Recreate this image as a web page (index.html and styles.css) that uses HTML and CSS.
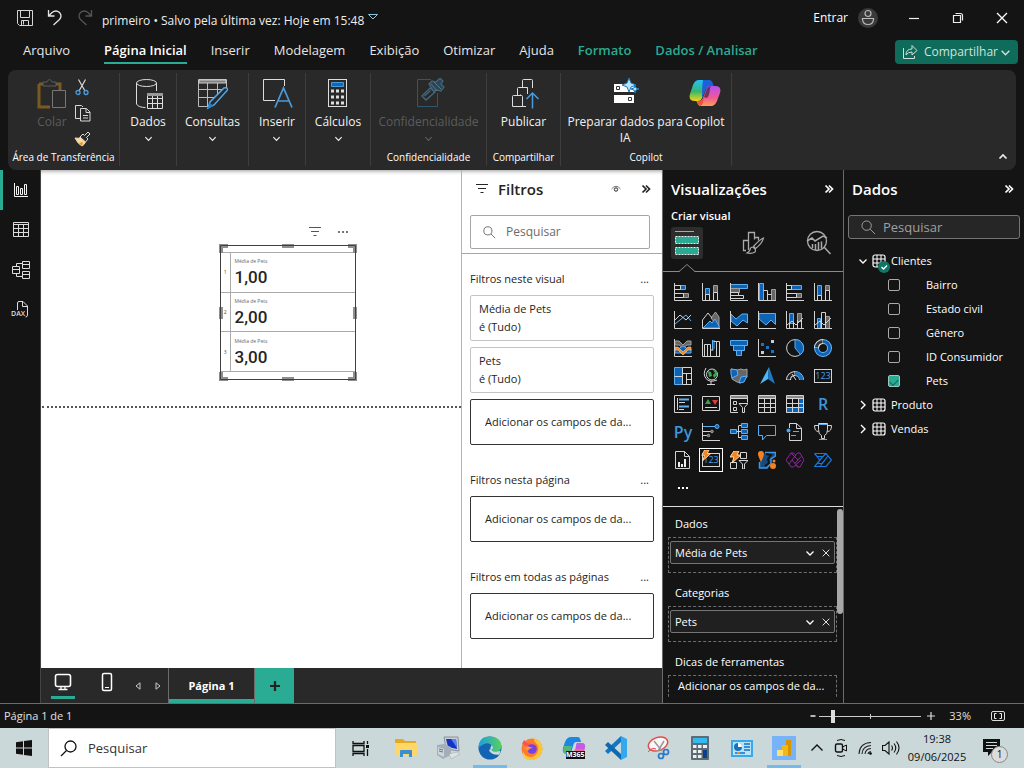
FILE: index.html
```html
<!DOCTYPE html>
<html lang="pt-BR">
<head>
<meta charset="utf-8">
<meta name="viewport" content="width=device-width, initial-scale=1">
<title>primeiro</title>
<link rel="stylesheet" href="styles.css">
</head>
<body>
<svg class="defs" aria-hidden="true">
  <symbol id="chev-down" viewBox="0 0 10 10"><path d="M1.500 3.500L5 7l3.500-3.500" fill="none" stroke="currentColor" stroke-width="1.300"/></symbol>
  <symbol id="chev-right" viewBox="0 0 10 10"><path d="M3 1l4 4-4 4" fill="none" stroke="currentColor" stroke-width="1.400"/></symbol>
  <symbol id="collapse" viewBox="0 0 10 10"><path d="M1.500 1.500L5 5 1.500 8.500M5 1.500L8.500 5 5 8.500" fill="none" stroke="currentColor" stroke-width="1.700"/></symbol>
  <symbol id="close" viewBox="0 0 12 12"><path d="M1 1l10 10M11 1L1 11" fill="none" stroke="currentColor" stroke-width="1.300"/></symbol>
  <symbol id="lens" viewBox="0 0 16 16"><path d="M9.800 9.800L15 15" stroke="currentColor" fill="none"/><circle cx="6" cy="6" r="5" fill="none" stroke="currentColor"/></symbol>
  <symbol id="funnel" viewBox="0 0 14 12"><path d="M1 1.500h12M3 5.500h8M5.500 9.500h3" fill="none" stroke="currentColor" stroke-width="1.200"/></symbol>
  <symbol id="tbl" viewBox="0 0 14 14"><rect x="1" y="1" width="12" height="12" rx="2" fill="none" stroke="currentColor" stroke-width="1.200"/><path d="M1 5h12M1 9h12M5 1v12M9 1v12" fill="none" stroke="currentColor"/></symbol>
</svg>

<header class="titlebar">
  <button class="ic" aria-label="Salvar"><svg width="16" height="16" viewBox="0 0 16 16"><path d="M.5.5h15v15h-13l-2-2zM3.500.5v7h9v-7M4.500 15.500v-5h7v5M6.500 11v3.500" fill="none" stroke="#d6d6d6"/></svg></button>
  <button class="ic" aria-label="Desfazer"><svg width="16" height="18" viewBox="0 0 16 18"><path d="M1.500 1v6h6M1.500 7L5 3.500Q9 .5 12.500 3.500 15.500 7 12.500 10.500L6.500 16" fill="none" stroke="#e4e4e4" stroke-width="1.300"/></svg></button>
  <button class="ic" aria-label="Refazer"><svg width="16" height="18" viewBox="0 0 16 18"><path d="M14.500 1v6h-6M14.500 7L11 3.500Q7 .5 3.500 3.500.5 7 3.500 10.500L9.500 16" fill="none" stroke="#555" stroke-width="1.300"/></svg></button>
  <span class="doc">primeiro • Salvo pela última vez: Hoje em 15:48</span>
  <button class="ic" aria-label="Mais opções"><svg width="10" height="10" viewBox="0 0 10 10"><path d="M.5 1.500h9L5 6z" fill="none" stroke="#8fc3e0"/></svg></button>
  <span class="spacer"></span>
  <button class="signin">Entrar <svg width="20" height="20" viewBox="0 0 20 20"><circle cx="10" cy="10" r="10" fill="#3a3a3a"/><circle cx="10" cy="5.500" r="3" fill="none" stroke="#bbb" stroke-width="1.200"/><path d="M4.500 10.500h11v1q-.5 5-5.500 5t-5.500-5z" fill="none" stroke="#bbb" stroke-width="1.200"/></svg></button>
  <button class="win" aria-label="Minimizar"><svg width="12" height="12" viewBox="0 0 12 12"><path d="M1 6.500h10" stroke="#eee" stroke-width="1.200"/></svg></button>
  <button class="win" aria-label="Restaurar"><svg width="12" height="12" viewBox="0 0 12 12"><path d="M1.500 3.500h7v7h-7zM3.500 1.500h5q2 0 2 2v5" fill="none" stroke="#eee" stroke-width="1.200"/></svg></button>
  <button class="win" aria-label="Fechar"><svg width="12" height="12"><use href="#close"/></svg></button>
</header>

<nav class="tabs" aria-label="Faixa de opções">
  <a class="tab file" href="#arquivo">Arquivo</a>
  <a class="tab on" href="#inicio">Página Inicial</a>
  <a class="tab" href="#inserir">Inserir</a>
  <a class="tab" href="#modelagem">Modelagem</a>
  <a class="tab" href="#exibicao">Exibição</a>
  <a class="tab" href="#otimizar">Otimizar</a>
  <a class="tab" href="#ajuda">Ajuda</a>
  <a class="tab ctx" href="#formato">Formato</a>
  <a class="tab ctx" href="#dados">Dados / Analisar</a>
  <span class="spacer"></span>
  <button class="share"><svg width="16" height="16" viewBox="0 0 16 16"><path d="M1.500 4v10.500h11V12M4 11q0-6 6-6V1.500L15 6.500l-5 4.500V8q-4 0-6 3z" fill="none" stroke="currentColor"/></svg>Compartilhar<svg width="11" height="11"><use href="#chev-down"/></svg></button>
</nav>

<section class="ribbon">
  <div class="group clip">
    <div class="tools">
      <button class="big off"><svg width="32" height="32" viewBox="0 0 32 32"><path d="M3 6h21v8M14 29H3V6" fill="none" stroke="#7b5a22" stroke-width="3"/><path d="M7 7V4h4q2.500-5 5 0h4v4H7z" fill="#2a2a2a" stroke="#5c5c5c"/><path d="M16.500 12.500h13v17h-13z" fill="#2a2a2a" stroke="#777"/></svg><span>Colar</span></button>
      <div class="minis">
        <button aria-label="Recortar"><svg width="16" height="17" viewBox="0 0 16 17"><path d="M4.500.5L11 12M11.500.5L5 12" fill="none" stroke="#d8d8d8" stroke-width="1.200"/><circle cx="4" cy="13.500" r="2" fill="none" stroke="#4a9bdc" stroke-width="1.300"/><circle cx="12" cy="13.500" r="2" fill="none" stroke="#4a9bdc" stroke-width="1.300"/></svg></button>
        <button aria-label="Copiar"><svg width="17" height="17" viewBox="0 0 17 17"><path d="M6 13.500H1.500V.5h6L9 2" fill="none" stroke="#d8d8d8"/><path d="M6.500 3.500h6l3.500 3.500v9H6.500zM12 3.500V7.500h4M9 10.500h5M9 13h5" fill="none" stroke="#d8d8d8"/></svg></button>
        <button aria-label="Pincel de formatação"><svg width="17" height="16" viewBox="0 0 17 16"><path d="M1 7q4 1 6-1l4.500 5Q10 14 8 15 4 13 1 7z" fill="#f3d9a8" stroke="#f6d9a4"/><path d="M5 12l4-1-1 4z" fill="#e8952c"/><path d="M6 6l3-3 1.500 1.500L14 1l2 2-3.500 3.500L14 8l-2.500 3z" fill="#2a2a2a" stroke="#ddd"/></svg></button>
      </div>
    </div>
    <h2>Área de Transferência</h2>
  </div>
  <div class="group g56"><button class="big"><svg width="32" height="32" viewBox="0 0 32 32"><path d="M4.500 5v21q2 3.500 9 3.500M24.500 5v8" fill="none" stroke="#ddd"/><ellipse cx="14.500" cy="5" rx="10" ry="3.500" fill="none" stroke="#ddd"/><path d="M15.500 15.500h15v15h-15zM15.500 20.500h15M15.500 25.500h15M20.500 18v12M25.500 18v12" fill="none" stroke="#ddd"/><path d="M15 15h16v3H15z" fill="#999"/></svg><span>Dados</span><svg class="dd"><use href="#chev-down"/></svg></button></div>
  <div class="group g72"><button class="big"><svg width="32" height="32" viewBox="0 0 32 32"><path d="M13 28.500H2.500v-27h28V10M2.500 11.500h25M2.500 19.500h17M11.500 5v23M21.500 5v12" fill="none" stroke="#bbb"/><path d="M3 2h27v3H3z" fill="#808080" stroke="#ccc"/><path d="M12 30l2-6L28 10q3-1 4 1.500L18 27z" fill="#292929" stroke="#55a9e8" stroke-width="1.500"/><path d="M12 30.500l1.500-6 4 3.500z" fill="#1683d8"/></svg><span>Consultas</span><svg class="dd"><use href="#chev-down"/></svg></button></div>
  <div class="group g56"><button class="big"><svg width="32" height="32" viewBox="0 0 32 32"><path d="M14 22.500H2.500v-21h21V8" fill="none" stroke="#ddd"/><path d="M14 29.500L22.500 10 31 29.500M17 23h11" fill="none" stroke="#4a9bdc" stroke-width="1.700"/></svg><span>Inserir</span><svg class="dd"><use href="#chev-down"/></svg></button></div>
  <div class="group g64"><button class="big"><svg width="32" height="32" viewBox="0 0 32 32"><rect x="6.500" y="1.500" width="18" height="27" fill="none" stroke="#ddd"/><path d="M9.500 4.500h12v4h-12z" fill="#1068b8" stroke="#4a9bdc"/><path d="M9 13h13M9 19h13M9 25h13" stroke="#ddd" stroke-width="3" stroke-dasharray="3 2"/></svg><span>Cálculos</span><svg class="dd"><use href="#chev-down"/></svg></button></div>
  <div class="group g115"><button class="big off"><svg width="32" height="32" viewBox="0 0 32 32"><path d="M18 1.500H4.500v27h20V15" fill="none" stroke="#33566e"/><path d="M9 18l8-8 5 4-9 8zM11.500 18l6-5.500" fill="none" stroke="#44687e" stroke-width="1.300"/><path d="M16 6l3-3 4 1 4-4 3 3-2 3 3 3-3 4-5-1-2 2z" fill="#2d4554" stroke="#44687e" stroke-width="1.200"/><path d="M21 4l7 7M18 6l6 7" stroke="#56788c"/></svg><span>Confidencialidade</span><svg class="dd"><use href="#chev-down"/></svg></button><h2>Confidencialidade</h2></div>
  <div class="group g73"><button class="big"><svg width="32" height="32" viewBox="0 0 32 32"><path d="M18 28.500H4.500v-10q0-1 1-1h7v-1M14.500 28V18.500q0-1-1-1h-4v-7q0-1 1-1h9v3M19.500 16V10.500q0-1-1-1h-4v-7q0-1 1-1h8q1 0 1 1V10" fill="none" stroke="#ddd"/><path d="M24.500 30.500v-15M18.500 21l6-6 6 6" fill="none" stroke="#4a9bdc" stroke-width="1.500"/></svg><span>Publicar</span></button><h2>Compartilhar</h2></div>
  <div class="group ai">
    <div class="tools">
      <button class="big prep"><svg width="32" height="32" viewBox="0 0 32 32"><path d="M5 6h20v8H5zM5 17h20v8H5z" fill="#fff"/><path d="M7.500 8.500h3v3h-3zM19.500 19.500h3v3h-3z" fill="#fff" stroke="#333"/><path d="M20 0l2 5 5 2-5 2-2 5-2-5-5-2 5-2zM26 7l1 3 3 1-3 1-1 3-1-3-3-1 3-1z" fill="#b8e2fa" stroke="#1879be"/></svg><span>Preparar dados para<br>IA</span></button>
      <button class="big"><svg width="32" height="32" viewBox="0 0 32 32"><defs><linearGradient id="ca" x2="0" y2="1"><stop offset="0" stop-color="#23c0fd"/><stop offset=".55" stop-color="#38b76a"/><stop offset="1" stop-color="#f4d414"/></linearGradient><linearGradient id="cb" x2="0" y2="1"><stop offset="0" stop-color="#b64ff0"/><stop offset=".6" stop-color="#f25a91"/><stop offset="1" stop-color="#ffa252"/></linearGradient></defs><path d="M10 2h10l-5 13-2 5q-1 3-4 3H6q-7 0-5-7L4 7q2-5 6-5z" fill="url(#ca)"/><path d="M14 2h6q3 0 4 4l1 3h-5q-3 0-4 4l-3 7q0-12 1-18z" fill="#1b62d8"/><path d="M22 28H12q-3 0-4-4l-1-1h3q3 0 4-3l3-8q1-4 4-4h5q7 0 5 7l-3 8q-2 5-6 5z" fill="url(#cb)"/><path d="M8 23h3q3 0 3-3l1-2-1 7q-1 3-3 3-2-1-3-5z" fill="#f0523a"/><path d="M18 11l-3 8 2 1q3 0 4-9 0-3 2-3-4 0-5 3z" fill="#141414" opacity=".55"/></svg><span>Copilot</span></button>
    </div>
    <h2>Copilot</h2>
  </div>
  <span class="spacer"></span>
  <button class="fold" aria-label="Recolher faixa"><svg width="10" height="10" viewBox="0 0 10 10"><path d="M1.500 6.500L5 3l3.500 3.500" fill="none" stroke="#eee" stroke-width="1.700"/></svg></button>
</section>

<main class="main">
  <nav class="rail" aria-label="Exibições">
    <a class="on" href="#relatorio" aria-label="Relatório"><svg width="16" height="16" viewBox="0 0 16 16"><path d="M1.500 1v13.500H15M3.500 4.500h2v8h-2zM7.500 6.500h2v6h-2zM11.500 2.500h2v10h-2z" fill="none" stroke="#f4f4f4"/></svg></a>
    <a href="#tabela" aria-label="Tabela"><svg width="18" height="16" viewBox="0 0 18 16"><path d="M1.500.5h15v14h-15zM1.500 2.500h15M1.500 6.500h15M1.500 10.500h15M6.500 3v12M11.500 3v12" fill="none" stroke="#ddd"/></svg></a>
    <a href="#modelo" aria-label="Modelo"><svg width="18" height="18" viewBox="0 0 18 18"><path d="M10.500.5h7v7h-7zM10.500 3.500h7M.5 5.500h7v7h-7zM.5 8.500h7M10.500 10.500h7v7h-7zM10.500 13.500h7M4.500 5V2.500h6M4.500 13v2.500h6" fill="none" stroke="#ddd"/></svg></a>
    <a class="dax" href="#dax" aria-label="Consulta DAX"><svg width="18" height="18" viewBox="0 0 18 18"><path d="M5.500 11V2q0-1.500 1.500-1.500h4L15.500 5v9q0 2-2 2M10.500 1v4.500h5" fill="none" stroke="#ddd"/></svg><b>DAX</b></a>
  </nav>

  <div class="work">
    <div class="stage">
      <section class="canvas" aria-label="Página do relatório">
        <div class="pageend"></div>
        <div class="visual">
          <div class="vtools"><svg width="14" height="12"><use href="#funnel"/></svg><svg width="12" height="4" viewBox="0 0 12 4"><path d="M1 2h2M5 2h2M9 2h2" stroke="#777" stroke-width="2"/></svg></div>
          <table class="cards">
            <tr><th>1</th><td><small>Média de Pets</small><strong>1,00</strong></td></tr>
            <tr><th>2</th><td><small>Média de Pets</small><strong>2,00</strong></td></tr>
            <tr><th>3</th><td><small>Média de Pets</small><strong>3,00</strong></td></tr>
          </table>
          <svg class="handles" viewBox="0 0 138 137" preserveAspectRatio="none"><path d="M2 9V2h7M129 2h7v7M136 128v7h-7M9 135H2v-7M63 2h12M63 135h12M2 63v12M136 63v12" fill="none" stroke="#8e8e8e" stroke-width="4"/><path d="M1.500 1.500h135v134h-135z" fill="none" stroke="#404040"/></svg>
        </div>
      </section>

      <aside class="filters" aria-label="Filtros">
        <header class="phead"><svg width="14" height="12"><use href="#funnel"/></svg><h1>Filtros</h1>
          <button class="ic" aria-label="Mostrar filtros"><svg width="10" height="8" viewBox="0 0 10 8"><path d="M.5 4Q5-1.500 9.500 4" fill="none" stroke="#777"/><circle cx="5" cy="4.500" r="1.700" fill="none" stroke="#222"/></svg></button>
          <button class="ic" aria-label="Recolher"><svg width="10" height="10"><use href="#collapse"/></svg></button></header>
        <label class="search"><svg width="13" height="13"><use href="#lens"/></svg><input type="text" placeholder="Pesquisar" aria-label="Pesquisar filtros"></label>
        <div class="flist">
          <section><h3>Filtros neste visual<button class="dots">...</button></h3>
            <div class="card"><span>Média de Pets</span><span>é (Tudo)</span></div>
            <div class="card"><span>Pets</span><span>é (Tudo)</span></div>
            <div class="card drop">Adicionar os campos de da...</div></section>
          <section><h3>Filtros nesta página<button class="dots">...</button></h3><div class="card drop">Adicionar os campos de da...</div></section>
          <section><h3>Filtros em todas as páginas<button class="dots">...</button></h3><div class="card drop">Adicionar os campos de da...</div></section>
        </div>
      </aside>
    </div>

    <footer class="pages">
      <button class="view on" aria-label="Layout da área de trabalho"><svg width="18" height="18" viewBox="0 0 18 18"><rect x="1.500" y="1.500" width="15" height="12" rx="2" fill="none" stroke="#fff" stroke-width="1.600"/><path d="M7 13.500v2.500M11 13.500v2.500M4.500 16.500h9" stroke="#fff" stroke-width="1.300"/></svg></button>
      <button class="view" aria-label="Layout móvel"><svg width="12" height="20" viewBox="0 0 12 20"><rect x="1.500" y="1.500" width="9" height="17" rx="1.500" fill="none" stroke="#fff" stroke-width="1.500"/><path d="M4 15.500h4" stroke="#fff"/></svg></button>
      <button class="arrow" aria-label="Página anterior"><svg width="6" height="8" viewBox="0 0 6 8"><path d="M5 .8v6.400L1 4z" fill="none" stroke="#ccc"/></svg></button>
      <button class="arrow" aria-label="Próxima página"><svg width="6" height="8" viewBox="0 0 6 8"><path d="M1 .8v6.400L5 4z" fill="none" stroke="#ccc"/></svg></button>
      <button class="page">Página 1</button>
      <button class="add" aria-label="Nova página"><svg width="12" height="12" viewBox="0 0 12 12"><path d="M6 1v10M1 6h10" stroke="#222" stroke-width="2.200"/></svg></button>
    </footer>
  </div>

  <aside class="viz" aria-label="Visualizações">
    <header class="phead"><h1>Visualizações</h1><button class="ic" aria-label="Recolher"><svg width="10" height="10"><use href="#collapse"/></svg></button></header>
    <h2 class="sub">Criar visual</h2>
    <div class="modes">
      <button class="mode on" aria-label="Criar visual"><svg width="26" height="26" viewBox="0 0 26 26"><path d="M1 1.500h19" stroke="#aaa"/><path d="M1.500 6.500h23v7h-23zM1.500 17.500h23v7h-23z" fill="#2aaa92" stroke="#eee" stroke-dasharray="2 1"/></svg></button>
      <button class="mode" aria-label="Formatar visual"><svg width="24" height="26" viewBox="0 0 24 26"><path d="M5 20.500H2.500V10.500h5v-8h6v7M7.500 10v10M13.500 7.500h4v3" fill="none" stroke="#aaa" stroke-width="1.300"/><path d="M22.500 8q-1 5-8 10.500l-2-2Q18 10 22.500 8zM12 17q-3 0-3 3-1 2-3 3 5 1 8-1 1-2 0-3z" fill="#151515" stroke="#aaa" stroke-width="1.200"/></svg></button>
      <button class="mode" aria-label="Análise"><svg width="26" height="26" viewBox="0 0 26 26"><circle cx="11" cy="11" r="9.500" fill="none" stroke="#aaa" stroke-width="1.300"/><path d="M1 11l5-3 3 3 8-5 4 2M6.500 18v-4M9.500 20v-6M12.500 20v-8M15.500 18.500v-7M18 17l6.500 7" fill="none" stroke="#aaa" stroke-width="1.500"/></svg></button>
    </div>
    <svg class="notch" width="16" height="8" viewBox="0 0 16 8"><path d="M0 8h16L8 0z" fill="#151515"/><path d="M0 7.500L8 .5l8 7" fill="none" stroke="#8a8a8a"/></svg>
    <div class="gallery">
      <button aria-label="Barras empilhadas"><svg viewBox="0 0 18 18"><path class="b" d="M6.500 2.500h5v4h-5z"/><path class="g" d="M9.500 10.500h5v4h-5z"/><path class="w" d="M.5 0v17.500H18M.5 2.500h6v4h-6M.5 10.500h9v4h-9"/></svg></button>
      <button aria-label="Colunas empilhadas"><svg viewBox="0 0 18 18"><path class="b" d="M3.500 5.500h4v6h-4z"/><path class="g" d="M11.500 2.500h4v7h-4z"/><path class="w" d="M.5 0v17.500H18M3.500 17v-5.500h4V17M11.500 17V9.500h4V17"/></svg></button>
      <button aria-label="Barras clusterizadas"><svg viewBox="0 0 18 18"><path class="b" d="M.5 1.500h17v4H.5z"/><path class="g" d="M.5 5.500h9v4h-9z"/><path class="w" d="M.5 0v17.500H18M.5 9.500h8v3h-8M.5 12.500h13v3H.5"/></svg></button>
      <button aria-label="Colunas clusterizadas"><svg viewBox="0 0 18 18"><path class="b" d="M1.500.5h4v17h-4z"/><path class="g" d="M13.500 6.500h4v11h-4z"/><path class="w" d="M.5 0v17.500H18M5.500 7.500h4v10M9.500 11.500h4"/></svg></button>
      <button aria-label="Barras 100%"><svg viewBox="0 0 18 18"><path class="b" d="M5.500 2.500h10v4h-10z"/><path class="g" d="M10.500 10.500h5v4h-5z"/><path class="w" d="M.5 0v17.500H18M.5 2.500h5v4h-5M.5 10.500h10v4H.5"/></svg></button>
      <button aria-label="Colunas 100%"><svg viewBox="0 0 18 18"><path class="b" d="M3.500 2.500h4v10h-4z"/><path class="g" d="M11.500 2.500h4v5h-4z"/><path class="w" d="M.5 0v17.500H18M3.500 17v-4.500h4V17M11.500 17V7.500h4V17"/></svg></button>

      <button aria-label="Linhas"><svg viewBox="0 0 18 18"><path class="lb" d="M1 13l5-4 6-5 5 6"/><path class="w" d="M.5 0v17.500H18M1 9l5-5 6 5 5-5"/></svg></button>
      <button aria-label="Área"><svg viewBox="0 0 18 18"><path class="g" d="M9 7l4.500-6L17 6v11z"/><path class="b" d="M1 17l7-7 2 2 3-4 4 7v2z"/><path class="w" d="M.5 9L6 2l4 5M.5 9v8.500H18"/></svg></button>
      <button aria-label="Área empilhada"><svg viewBox="0 0 18 18"><path class="b" d="M1 3l5 5 6-5h5.500v9L13 9l-6 6-6-5z"/><path class="w" d="M.5 0v17.500H18"/></svg></button>
      <button aria-label="Área 100%"><svg viewBox="0 0 18 18"><path class="b" d="M1 2.500h16.500v11L13 9l-5 5-7-6z"/><path class="w" d="M.5 0v17.500H18"/></svg></button>
      <button aria-label="Linha e coluna empilhada"><svg viewBox="0 0 18 18"><path class="b" d="M3.500 2.500h4v10h-4z"/><path class="g" d="M11.500 2.500h4v8h-4z"/><path class="w" d="M.5 0v17.500H18M3.500 12v5M7.500 12v5M11.500 9v8M15.500 9v8M1 14l5-4 4 4 7-7"/></svg></button>
      <button aria-label="Linha e coluna clusterizada"><svg viewBox="0 0 18 18"><path class="b" d="M3.500 7.500h3v10h-3z"/><path class="g" d="M11.500 5.500h4v12h-4z"/><path class="w" d="M.5 0v17.500H18M7.500 17V1.500h4V17M1 14l5-4 4 4 7-7"/></svg></button>

      <button aria-label="Faixa de opções"><svg viewBox="0 0 18 18"><path class="g" d="M1 2h4l4 4 4-4h4v4h-4l-4 3-4-3H1z"/><path class="b" d="M1 10h3l5-3 5 3h3v4H1z"/><path d="M1 8h3l5 5 5-5h3v3h-3l-5 5-5-5H1z" fill="#f08a2a" stroke="#fbd5a0" stroke-width=".6"/><path class="w" d="M.5 0v17.500H18"/></svg></button>
      <button aria-label="Cascata"><svg viewBox="0 0 18 18"><path class="lb" d="M10.500 1v10M12 1v9"/><path class="w" d="M.5 0v17.500H18M2.500 17V5.500h3V17M5.500 5.500h3v5.500h3M8.500 11v6M11.500 2.500h3V17M14.500 2.500h3V17"/></svg></button>
      <button aria-label="Funil"><svg viewBox="0 0 18 18"><path class="b" d="M.5 1.500h17v5H.5zM3.500 6.500h11v5h-11zM6.500 11.500h5v5h-5z"/></svg></button>
      <button aria-label="Dispersão"><svg viewBox="0 0 18 18"><path d="M3 4h3v3H3zM8 7h3v3H8zM13 11h3v3h-3z" fill="#1974c8"/><path d="M13 1h3v3h-3zM3 12h3v3H3z" fill="#ccc"/><path class="w" d="M.5 0v17.500H18"/></svg></button>
      <button aria-label="Pizza"><svg viewBox="0 0 18 18"><circle class="w" cx="9" cy="9" r="8.400"/><path class="b" d="M9 .6A8.400 8.400 0 0 1 14.500 15.500L9 9z"/></svg></button>
      <button aria-label="Rosca"><svg viewBox="0 0 18 18"><circle cx="9" cy="9" r="6.500" fill="none" stroke="#6cb8f6" stroke-width="5"/><circle cx="9" cy="9" r="6.500" fill="none" stroke="#0f63b5" stroke-width="3"/><path d="M2.500 9A6.500 6.500 0 0 1 9 2.500" fill="none" stroke="#ddd" stroke-width="5"/><path d="M2.500 8.500A6.500 6.500 0 0 1 8.500 2.500" fill="none" stroke="#333" stroke-width="3"/></svg></button>

      <button aria-label="Treemap"><svg viewBox="0 0 18 18"><path class="b" d="M.5.5h8v17h-8z"/><path class="w" d="M8.500.5h9v17h-9zM8.500 6.500h9M12.500 6.500v11M12.500 12.500h5M.5 9.500h8"/></svg></button>
      <button aria-label="Mapa"><svg viewBox="0 0 18 18"><circle class="w" cx="10" cy="7.500" r="5.500"/><path d="M6 4l3 1 1 4-3 1zM11 3l4 1v4l-3 3-1-3 2-2z" fill="#3da653"/><path class="w" d="M4 1Q.5 7 4 11.500T15 13M9 14v3M5 17.500h8"/></svg></button>
      <button aria-label="Mapa coroplético"><svg viewBox="0 0 18 18"><path class="g" d="M1 2l6 1 4-1 3 1 3-1v8l-6 6-4-1-5-3z"/><path class="b" d="M1 2l6 1 1 5-6 3-1-4zM9 16l2-6 6-1-3 6z"/></svg></button>
      <button aria-label="Azure Maps"><svg viewBox="0 0 18 18"><path d="M11 0L2 17l8-5z" fill="#4db8ef"/><path d="M11 0l6 17-7-5z" fill="#1d78c2"/></svg></button>
      <button aria-label="Medidor"><svg viewBox="0 0 18 18"><path d="M2.500 13a6.500 6.500 0 0 1 13 0" fill="none" stroke="#ddd" stroke-width="5"/><path d="M2.500 12.500a6.500 6.500 0 0 1 6-6" fill="none" stroke="#222" stroke-width="3"/><path d="M9 6.500a6.500 6.500 0 0 1 6.500 6.500" fill="none" stroke="#1974c8" stroke-width="4"/><path class="w" d="M6 7l4 6"/></svg></button>
      <button class="num" aria-label="Cartão"><span>123</span></button>

      <button aria-label="Cartão de várias linhas"><svg viewBox="0 0 18 18"><path class="w" d="M.5.500h17v17H.5zM3.500 3v12"/><path class="lb" d="M5 4.500h10M5 11.500h10" stroke-width="2"/><path class="w" d="M5 7.500h6M5 14.500h5"/></svg></button>
      <button aria-label="KPI"><svg viewBox="0 0 18 18"><path class="w" d="M.5 1.500h17v14H.5zM3 12.500h12"/><path d="M3 9l3-5 3 5z" fill="#37a34a"/><path d="M10 5h6l-3 5z" fill="#e03a3a"/></svg></button>
      <button aria-label="Segmentação"><svg viewBox="0 0 18 18"><path class="w" d="M8 17.500H.5V.500h17v7M.5 3.500h17M3.500 6.500h3v3h-3zM3.500 12.500h3v3h-3zM9 8.500h9l-3.500 4v5h-2v-5z"/><path d="M1 1h16v2H1z" fill="#888"/></svg></button>
      <button aria-label="Tabela"><svg viewBox="0 0 18 18"><path class="w" d="M.5.500h17v17H.5zM.5 3.500h17M.5 8.500h17M.5 12.500h17M6.500 3v14M12.500 3v14"/><path d="M1 1h16v2H1z" fill="#888"/></svg></button>
      <button aria-label="Matriz"><svg viewBox="0 0 18 18"><path class="b" d="M12.500 3.500h5v14H.5v-5h12z"/><path class="w" d="M.5.500h17v17H.5zM.5 3.500h17M.5 8.500h17M.5 12.500h17M6.500 3v14M12.500 3v14"/><path d="M1 1h16v2H1z" fill="#888"/></svg></button>
      <button class="txt" aria-label="Visual R">R</button>

      <button class="txt" aria-label="Visual Python">Py</button>
      <button aria-label="Influenciadores"><svg viewBox="0 0 18 18"><path class="w" d="M.5 0v17.500H18M1 8.500h8M1 12.500h4"/><path class="lb" d="M1 3.500h12"/><circle class="b" cx="15" cy="3.500" r="2"/><circle class="g" cx="10" cy="8.500" r="1.300"/><circle class="g" cx="6.500" cy="12.500" r="1.300"/></svg></button>
      <button aria-label="Árvore hierárquica"><svg viewBox="0 0 18 18"><path class="w" d="M6 8.500h6M8.500 3v12M8.500 2.500h3M8.500 14.500h3"/><path class="b" d="M.5 6.500h6v4h-6zM11.500.5h6v4h-6zM11.500 6.500h6v4h-6zM11.500 12.500h6v4h-6z"/></svg></button>
      <button aria-label="P e R"><svg viewBox="0 0 18 18"><path class="lb" d="M.5 2.500h17v10H8.500L4.500 17v-4.500h-4z"/></svg></button>
      <button aria-label="Narrativa"><svg viewBox="0 0 18 18"><path class="w" d="M3.500 5V.5h7l5 4.500v12.500h-12V10M10.500.5v5h5"/><circle cx="2.500" cy="7.500" r="2" fill="#4aa3ee"/><path class="lb" d="M7 8.500h6M5 12.500h5"/></svg></button>
      <button aria-label="Metas"><svg viewBox="0 0 18 18"><path class="w" d="M4.500.5h9v6q0 5-3 6v3h-3v-3q-3-1-3-6zM4.500 2.500h-4q0 6 4 6M13.500 2.500h4q0 6-4 6"/><path class="lb" d="M4.500 1.500h9M5 16.500h8"/></svg></button>

      <button aria-label="Relatório paginado"><svg viewBox="0 0 18 18"><path class="w" d="M1.500.5h9l5 5v12h-14zM10.500.5v5h5"/><path d="M4 11h2v5H4zM7 13h2v3H7zM10 8h2v8h-2z" fill="#eee"/></svg></button>
      <button class="num sel" aria-label="Cartão (novo)"><span>123</span><svg viewBox="0 0 18 18"><path d="M4 0h5L7 4h4L2 12l2-6H1z" fill="#f58220" stroke="#ffe0a8"/></svg></button>
      <button aria-label="Segmentação de dados (nova)"><svg viewBox="0 0 18 18"><path class="w" d="M10.500 1.500h6v6h-6zM.5 11.500h6v6h-6zM9 9.500h9l-3.500 3.500v5h-2v-5z"/><path d="M4 0h5L7 4h4L2 12l2-6H0z" fill="#f58220" stroke="#ffe0a8"/></svg></button>
      <button aria-label="ArcGIS"><svg viewBox="0 0 18 18"><path d="M7 1.500h10.500V5L13 8v4l-4 5H1.500v-6" fill="#164a80" stroke="#3a96e8" stroke-width="1.500"/><path d="M8 3l5 1-3 4 1 4-4 3" fill="none" stroke="#141414" stroke-width="2"/><path d="M3 11Q0 5 0 3a3 3 0 0 1 6 0q0 2-3 8z" fill="#f58220"/><circle cx="15" cy="15" r="3" fill="#f58220"/><circle cx="16" cy="10" r="1.500" fill="#f58220"/></svg></button>
      <button aria-label="Power Apps"><svg viewBox="0 0 18 18"><path d="M5 2h2.500l2 2 2-2H14l4 7-4 7h-2.500l-2-2-2 2H5L0 9zM5 2l7 7-3 3.500L6 9l4-5M12 9l3-3.500M6 9l-3 4M9 12.500l3 3.500M9.500 14L15 9" fill="none" stroke="#8a2a9a"/></svg></button>
      <button aria-label="Power Automate"><svg viewBox="0 0 18 18"><path d="M.5 2.500h11.500L17.500 9 12 15.500H.5L3 12.500h5L11 9M.5 2.500L3 5.500h6L3 12.500M5.500 9L3 5.500M12 2.500L9 5.500M14 5L6 15.500" fill="none" stroke="#1478dc" stroke-width="1.200"/></svg></button>

      <button class="more" aria-label="Obter mais visuais"><svg viewBox="0 0 18 18"><path d="M4 9h2M8 9h2M12 9h2" stroke="#fff" stroke-width="2"/></svg></button>
    </div>
    <div class="wells">
      <h3>Dados</h3>
      <div class="well"><div class="pill"><span>Média de Pets</span><button class="ic" aria-label="Opções"><svg width="10" height="10"><use href="#chev-down"/></svg></button><button class="ic" aria-label="Remover"><svg width="8" height="8"><use href="#close"/></svg></button></div></div>
      <h3>Categorias</h3>
      <div class="well"><div class="pill"><span>Pets</span><button class="ic" aria-label="Opções"><svg width="10" height="10"><use href="#chev-down"/></svg></button><button class="ic" aria-label="Remover"><svg width="8" height="8"><use href="#close"/></svg></button></div></div>
      <h3>Dicas de ferramentas</h3>
      <div class="well last"><p>Adicionar os campos de da...</p></div>
      <i class="thumb"></i>
    </div>
  </aside>

  <aside class="data" aria-label="Dados">
    <header class="phead"><h1>Dados</h1><button class="ic" aria-label="Recolher"><svg width="10" height="10"><use href="#collapse"/></svg></button></header>
    <label class="search dark"><svg width="15" height="15"><use href="#lens"/></svg><input type="text" placeholder="Pesquisar" aria-label="Pesquisar dados"></label>
    <ul class="tree">
      <li><button class="node"><svg width="10" height="10"><use href="#chev-down"/></svg><span class="ticon"><svg width="14" height="14"><use href="#tbl"/></svg><svg class="ok" width="12" height="12" viewBox="0 0 12 12"><circle cx="6" cy="6" r="6" fill="#0f7564"/><path d="M3.500 6l2 2 3.500-3.500" fill="none" stroke="#fff" stroke-width="1.300"/></svg></span>Clientes</button>
        <ul>
          <li><label><input type="checkbox">Bairro</label></li>
          <li><label><input type="checkbox">Estado civil</label></li>
          <li><label><input type="checkbox">Gênero</label></li>
          <li><label><input type="checkbox">ID Consumidor</label></li>
          <li><label><input type="checkbox" checked>Pets</label></li>
        </ul></li>
      <li><button class="node"><svg width="10" height="10"><use href="#chev-right"/></svg><span class="ticon"><svg width="14" height="14"><use href="#tbl"/></svg></span>Produto</button></li>
      <li><button class="node"><svg width="10" height="10"><use href="#chev-right"/></svg><span class="ticon"><svg width="14" height="14"><use href="#tbl"/></svg></span>Vendas</button></li>
    </ul>
  </aside>
</main>

<footer class="status"><span>Página 1 de 1</span><span class="spacer"></span>
  <button class="ic" aria-label="Reduzir"><svg width="6" height="8" viewBox="0 0 6 8"><path d="M.5 4h5" stroke="#eee" stroke-width="1.500"/></svg></button>
  <input class="zoom" type="range" min="10" max="100" value="21" aria-label="Zoom">
  <button class="ic" aria-label="Ampliar"><svg width="8" height="8" viewBox="0 0 8 8"><path d="M0 4h8M4 0v8" stroke="#ddd" stroke-width="1.200"/></svg></button>
  <span class="pct">33%</span>
  <button class="ic" aria-label="Ajustar à página"><svg width="16" height="12" viewBox="0 0 16 12"><rect x="1.500" y="1.500" width="13" height="9" rx="1.500" fill="none" stroke="#ddd"/><path d="M6.500 3.500h-2v5h2M9.500 3.500h2v5h-2" fill="none" stroke="#eee"/></svg></button>
</footer>

<footer class="taskbar">
  <button class="start" aria-label="Iniciar"><svg width="16" height="16" viewBox="0 0 16 16"><path d="M0 2.300l7-1v6.200H0zM8 1.100L16 0v7.500H8zM0 8.500h7v6.200l-7-1zM8 8.500h8V16l-8-1.100z" fill="#111"/></svg></button>
  <label class="tsearch"><svg width="17" height="17" viewBox="0 0 17 17"><circle cx="10.500" cy="6.500" r="5.500" fill="none" stroke="#111" stroke-width="1.300"/><path d="M6.500 10.500L1 16" stroke="#111" stroke-width="1.300"/></svg><input type="text" placeholder="Pesquisar" aria-label="Pesquisar no computador"></label>
  <button class="tview" aria-label="Visão de tarefas"><svg width="17" height="17" viewBox="0 0 17 17"><path d="M1 1v2.500h11V1M1 5.500h11v6H1zM1 16v-2.500h11V16M15.500 1v3M15.500 9v7" fill="none" stroke="#111" stroke-width="1.300"/><path d="M14 5h3v3h-3z" fill="#111"/></svg></button>
  <div class="apps">
    <button aria-label="Explorador"><svg viewBox="0 0 24 24"><path d="M1 3h8l2 2h11v15H1z" fill="#e9a91f"/><path d="M1 7h22v13H1z" fill="#ffd668"/><path d="M6 21v-6q0-1 1-1h10q1 0 1 1v6h-3v-3H9v3z" fill="#3a8fd0"/></svg></button>
    <button aria-label="Área remota"><svg viewBox="0 0 24 24"><path d="M8 1h14l1 14-13-2z" fill="#c9cfd6" stroke="#8a929a"/><path d="M10 3h10l1 10-9-2z" fill="#1431c8"/><path d="M15 3h5l1 9z" fill="#5b82ee"/><path d="M1 9l7-1 7 3v8l-8 4-6-4z" fill="#a3aeb8"/><path d="M2 11l6 2v8l-6-3z" fill="#cdd5db"/><path d="M3 13l4 1M3 15l4 1" stroke="#6d7780"/><path d="M13 18l8-2 3 2-9 5z" fill="#dfe3e6" stroke="#9aa2a9" stroke-width=".5"/></svg></button>
    <button class="run" aria-label="Edge"><svg viewBox="0 0 24 24"><defs><linearGradient id="ed"><stop offset="0" stop-color="#1c9fe0"/><stop offset="1" stop-color="#58d05a"/></linearGradient></defs><circle cx="12" cy="12" r="11.500" fill="#1464b4"/><path d="M.5 12Q1 0 12 .5 23 1 23.500 10q0 5-6 5.500-4 0-4-2 2-2 0-4.500-3-3-7.500-1Q2 10 .5 12z" fill="url(#ed)"/><path d="M13 13q-1 4 4 5 3 0 6-1-2 1-5 1-6 0-7-4z" fill="#cbd8da"/><path d="M13.500 9q3 3 0 4.500 0 2 4 2 3 0 5-1l-1 4q-7 1-9-3-1-3 1-6.500z" fill="#cbd8da"/></svg></button>
    <button aria-label="Firefox"><svg viewBox="0 0 24 24"><circle cx="12" cy="13" r="10.500" fill="#ff7a2c"/><path d="M15 1q-2 4 1 6 3 3 2 8-2 6-8 6-6-1-7-6-1 9 8 9 11-1 11.500-11Q22 7 19 5q-4-1-4-4z" fill="#ffc633"/><path d="M2 8l2-4 3 3 5 1-3 3z" fill="#ff4f5e"/><circle cx="12" cy="13" r="4.800" fill="#7542e5"/><path d="M4 12q4-3 9 0-4 0-5 3z" fill="#ff9640"/></svg></button>
    <button class="m365" aria-label="M365 Copilot"><svg viewBox="0 0 24 24"><path d="M9 1h7q2 0 3 5h-5q-2 0-3 4l-2 7H3q-3 0-2-5l2-6q2-5 6-5z" fill="#1c87e5"/><path d="M2 10h8l-2 8H3q-3-1-1-8z" fill="#54b77a"/><path d="M15 7h5q4 0 3 5l-2 7h-9l2-9q0-3 1-3z" fill="#c55ae6"/><path d="M13 13h9l-2 6h-9z" fill="#f4688e"/></svg><b>M365</b></button>
    <button aria-label="VS Code"><svg viewBox="0 0 24 24"><path d="M17 0l6 3v18l-6 3z" fill="#35a7ee"/><path d="M17 0v6L4 18l-3-3z" fill="#1277c2"/><path d="M17 24v-6L4 6 1 9z" fill="#0f69b0"/></svg></button>
    <button aria-label="Captura"><svg viewBox="0 0 24 24"><ellipse cx="12" cy="8" rx="10" ry="6.500" transform="rotate(-20 12 8)" fill="#f7f7f7" stroke="#e34c4c" stroke-width="1.500"/><path d="M2 16q4-5 8-3" stroke="#e34c4c" fill="none"/><path d="M8 5l8 10M18 5l-6 10" stroke="#999" stroke-width="1.500"/><circle cx="15" cy="20" r="2.500" fill="none" stroke="#2878c8" stroke-width="1.700"/><circle cx="20" cy="16" r="2.500" fill="none" stroke="#2878c8" stroke-width="1.700"/></svg></button>
    <button aria-label="Calculadora"><svg viewBox="0 0 24 24"><rect x="3" width="18" height="24" rx="1" fill="#5e6a74"/><path d="M5 2h14v5H5z" fill="#32bbee"/><path d="M5 9h3.500v3H5zM10 9h3.500v3H10zM15 9h4v3h-4zM5 14h3.500v3H5zM10 14h3.500v3H10zM5 19h3.500v3H5zM10 19h3.500v3H10z" fill="#edf1f4"/><path d="M15 14h4v8h-4z" fill="#08428a"/></svg></button>
    <button aria-label="Painel de controle"><svg viewBox="0 0 24 24"><rect x="1" y="4" width="22" height="17" fill="#3ba7e7"/><path d="M3 6h18v13H3z" fill="#b5e5fb"/><circle cx="8" cy="11" r="4" fill="#1970bf"/><path d="M8 7v4h4a4 4 0 0 0-4-4z" fill="#fff"/><path d="M14 8h6M14 11h6M14 14h6M5 17h10" stroke="#1970bf" stroke-width="1.500"/><path d="M7 16h3v2H7z" fill="#f08b24"/></svg></button>
    <button class="run active" aria-label="Power BI"><svg viewBox="0 0 24 24"><path d="M14 4h5v16h-5z" fill="#d99400"/><path d="M10 9h6v11h-6z" fill="#f2b817"/><path d="M5 14h6v6H5z" fill="#ffe06a"/></svg></button>
  </div>
  <span class="spacer"></span>
  <div class="tray">
    <button aria-label="Ícones ocultos"><svg width="14" height="14" viewBox="0 0 14 14"><path d="M1.500 9.500L7 4l5.500 5.500" fill="none" stroke="#111" stroke-width="1.400"/></svg></button>
    <button aria-label="Reunir"><svg width="14" height="18" viewBox="0 0 14 18"><rect x="1.500" y="5" width="7" height="8" rx="1.500" fill="none" stroke="#111" stroke-width="1.400"/><path d="M8.500 8l4-2v6l-4-2M3 1.500q4-2 8 0M3 16.500q4 2 8 0" fill="none" stroke="#111"/></svg></button>
    <button aria-label="Wi-Fi"><svg width="14" height="16" viewBox="0 0 14 16"><path d="M1 14Q1.500 3 13 2.500M4 14q.5-8 9-8.500M7 14q.5-5 6-5.500M10 14q0-2 3-2.500" fill="none" stroke="#222" stroke-width="1.100"/><circle cx="12.500" cy="13.500" r="1.300"/></svg></button>
    <button aria-label="Volume"><svg width="18" height="16" viewBox="0 0 18 16"><path d="M.5 5.500H3L7 2v12l-4-3.500H.5zM9.500 5.500q2 2.500 0 5M12 3.500q3.500 4.500 0 9M14.500 1.500q5 6.500 0 13" fill="none" stroke="#111" stroke-width="1.100"/></svg></button>
  </div>
  <button class="clock"><span>19:38</span><span>09/06/2025</span></button>
  <button class="notif" aria-label="Notificações"><svg width="18" height="18" viewBox="0 0 18 18"><path d="M0 0h17v13h-8l-4 4v-4H0z" fill="#111"/><path d="M3 3.500h11M3 6.500h11M3 9.500h7" stroke="#ccd8da" stroke-width="1.200"/></svg><b>1</b></button>
</footer>
</body>
</html>
```
FILE: styles.css
```css
:root {
  --bg: #141414;
  --panel: #292929;
  --teal: #2aab93;
  --line: #6b6b6b;
  --ui: "Open Sans", "Noto Sans", sans-serif;
}
* { box-sizing: border-box; }
body {
  margin: 0;
  height: 100vh;
  display: flex;
  flex-direction: column;
  overflow: hidden;
  background: var(--bg);
  color: #fff;
  font: 11px/18px var(--ui);
}
button, input { font: inherit; color: inherit; }
button { background: none; border: 0; padding: 0; margin: 0; }
h1, h2, h3, p, ul { margin: 0; padding: 0; font: inherit; }
ul { list-style: none; }
a { color: inherit; text-decoration: none; }
svg { flex: none; display: block; }
.defs { position: absolute; width: 0; height: 0; }
.spacer { flex: 1; }
.ic { display: grid; place-items: center; }

/* title bar */
.titlebar { display: flex; align-items: center; height: 36px; padding-left: 17px; gap: 14px; flex: none; }
.doc { margin-left: -5px; margin-top: 5px; font-size: 12px; white-space: nowrap; color: #eee; }
.titlebar .doc + .ic { margin-left: -10px; }
.signin { display: flex; align-items: center; gap: 10px; font-size: 12px; }
.win { width: 44px; height: 36px; display: grid; place-items: center; margin-left: -14px; }
.signin + .win { margin-left: 0; }

/* ribbon tabs */
.tabs { display: flex; align-items: center; height: 34px; padding: 0 6px 4px 23px; gap: 24px; flex: none; }
.tab { font-size: 13px; line-height: 24px; white-space: nowrap; color: #e6e6e6; border-bottom: 2px solid transparent; }
.tab.file { margin-right: 10px; }
.tab.on { font-weight: 600; color: #fff; border-color: var(--teal); }
.tab.ctx { color: var(--teal); font-weight: 600; }
.share { display: flex; align-items: center; gap: 6px; height: 24px; padding: 0 7px; border-radius: 4px; background: #0f6b5a; color: #d0e2de; font-size: 12px; margin-top: 2px; }
.share svg:last-child { margin-left: -4px; }

/* ribbon */
.ribbon { display: flex; height: 100px; margin: 0 8px; padding: 3px 0 4px; background: var(--panel); border-radius: 8px; flex: none; position: relative; }
.group { display: flex; flex-direction: column; align-items: center; border-right: 1px solid #3d3d3d; padding-top: 5px; }
.group h2 { margin-top: auto; font-size: 10px; line-height: 18px; font-weight: 500; white-space: nowrap; }
.clip { width: 112px; }
.g56 { width: 57px; }
.g72 { width: 72px; }
.g64 { width: 65px; }
.g115 { width: 116px; }
.g73 { width: 74px; }
.ai { width: 171px; }
.tools { display: flex; align-items: flex-start; gap: 6px; }
.ai .tools { gap: 2px; }
.big { display: flex; flex-direction: column; align-items: center; font-size: 12px; line-height: 16px; white-space: nowrap; color: #f2f2f2; }
.big span { margin-top: 4px; }
.big.off { color: #5c5c5c; }
.big .dd { width: 9px; height: 9px; margin-top: 4px; }
.minis { display: flex; flex-direction: column; gap: 8px; }
.minis button { margin-top: 1px; }
.fold { position: absolute; right: 8px; bottom: 8px; }

/* body */
.main { flex: 1; min-height: 0; display: flex; border-bottom: 1px solid var(--line); }
.rail { width: 41px; border-right: 1px solid #444; flex: none; }
.rail a { display: grid; place-items: center; height: 40px; border-left: 3px solid transparent; padding-right: 2px; }
.rail a.on { border-color: var(--teal); }
.rail .dax { position: relative; }
.dax b { position: absolute; left: 8px; top: 20px; font-size: 7px; line-height: 8px; font-weight: 600; color: #ddd; background: var(--bg); }
.work { flex: 1; min-width: 0; display: flex; flex-direction: column; }
.stage { flex: 1; min-height: 0; display: flex; background: #fff; color: #252423; box-shadow: inset 0 4px 4px -3px #999; }

.canvas { flex: 1; position: relative; }
.pageend { position: absolute; left: 1px; right: 0; top: 236px; border-top: 2px dotted #555; }
.visual { position: absolute; left: 178px; top: 74px; width: 138px; height: 137px; padding: 8px 2px; }
.handles { position: absolute; left: 0; top: 0; width: 138px; height: 137px; }
.vtools { position: absolute; right: 8px; top: -18px; display: flex; align-items: center; gap: 15px; color: #555; }
.cards { width: 100%; height: 120px; border-collapse: collapse; border-top: 1px solid #aaa; border-bottom: 1px solid #aaa; }
.cards tr { border-bottom: 1px solid #aaa; }
.cards th { width: 9px; padding: 0; font-size: 5px; font-weight: 400; color: #444; border-right: 1px solid #aaa; }
.cards td { padding: 0 0 0 4px; }
.cards small { display: block; font-size: 5px; line-height: 10px; color: #666; }
.cards strong { display: block; font: 500 17px/22px Roboto, sans-serif; color: #252423; }

.phead { display: flex; align-items: center; height: 38px; }
.phead h1 { flex: 1; font-size: 15px; font-weight: 600; }
.filters { width: 201px; flex: none; border-left: 1px solid #b3b3b3; }
.filters .phead { padding: 0 11px 0 13px; gap: 9px; }
.filters .phead .ic { margin-left: 11px; }
.search { display: flex; align-items: center; gap: 10px; height: 34px; margin: 7px 12px 4px 8px; padding: 0 12px; border: 1px solid #a6a6a6; border-radius: 2px; color: #555; font-size: 12px; }
.search input { flex: 1; min-width: 0; border: 0; background: none; padding: 0; outline: 0; }
input::placeholder { color: #6b6b6b; opacity: 1; }
.flist { border-top: 1px solid #a6a6a6; padding: 16px 8px 0; display: flex; flex-direction: column; gap: 26px; }
.flist section { display: flex; flex-direction: column; gap: 6px; }
.flist h3 { display: flex; justify-content: space-between; padding-right: 5px; margin-bottom: 1px; white-space: nowrap; }
.card { height: 46px; border: 1px solid #c4c4c4; border-radius: 2px; padding: 4px 8px; display: flex; flex-direction: column; }
.card.drop { border-color: #333; padding: 0 14px; justify-content: center; white-space: nowrap; }

/* page tabs */
.pages { height: 35px; display: flex; background: var(--panel); flex: none; padding-left: 10px; }
.view { width: 24px; margin-right: 20px; display: grid; place-items: center; border-bottom: 3px solid transparent; height: 31px; }
.view.on { border-color: var(--teal); }
.arrow { width: 20px; display: grid; place-items: center; }
.view + .arrow { margin-left: -11px; }
.page { width: 87px; font-weight: 700; border: 1px solid var(--line); border-width: 0 1px; box-shadow: inset 0 -4px var(--teal); }
.add { width: 39px; background: var(--teal); display: grid; place-items: center; }

/* visualizations */
.viz { width: 182px; flex: none; border: 1px solid var(--line); border-width: 0 1px; display: flex; flex-direction: column; position: relative; }
.viz .phead { padding: 0 9px 0 8px; }
.sub { padding-left: 8px; font-weight: 600; line-height: 16px; }
.modes { display: flex; justify-content: space-between; padding: 3px 8px 12px; border-bottom: 1px solid #8a8a8a; }
.mode { width: 32px; height: 32px; border-radius: 3px; display: grid; place-items: center; }
.mode.on { background: #2d2d2d; }
.notch { position: absolute; left: 16px; top: 94px; }
.gallery { display: grid; grid-template-columns: repeat(6, 28px); grid-auto-rows: 28px; padding: 6px 4px 4px 6px; border-bottom: 1px solid #ddd; }
.gallery button { display: grid; place-items: center; position: relative; }
.gallery svg { width: 18px; height: 18px; }
.w { fill: none; stroke: #d4d4d4; }
.b { fill: #0f63b5; stroke: #5cb0f2; }
.g { fill: #666; stroke: #a0a0a0; }
.lb { fill: none; stroke: #5cb0f2; }
.gallery .num span { width: 18px; height: 14px; border: 1px solid #d4d4d4; font-size: 9px; line-height: 12px; color: #4a9fe4; display: block; }
.gallery .sel { outline: 1px solid #fff; outline-offset: -3px; }
.gallery .sel svg { position: absolute; left: 4px; top: 4px; width: 16px; height: 16px; }
.gallery .txt { font-size: 16px; font-weight: 600; color: #3f96dc; }
.wells { flex: 1; min-height: 0; overflow: hidden; position: relative; padding: 8px 6px 0 5px; margin-bottom: 6px; }
.wells h3 { padding-left: 7px; margin-bottom: 4px; }
.well { height: 36px; border: 1px dashed #6e6e6e; padding: 3px 1px; margin-bottom: 11px; }
.well.last { padding-top: 0; }
.well p { padding: 2px 8px; line-height: 16px; white-space: nowrap; }
.pill { height: 23px; border: 1px solid #757575; border-radius: 2px; background: #202020; display: flex; align-items: center; padding: 0 4px; gap: 7px; }
.pill span { flex: 1; }
.thumb { position: absolute; right: 0; top: 2px; width: 6px; height: 105px; border-radius: 3px; background: #a8a8a8; }

/* data pane */
.data { width: 180px; flex: none; }
.data .phead { padding: 0 10px 0 8px; }
.search.dark { height: 24px; margin: 7px 4px 10px; border-color: #757575; border-radius: 3px; background: #262626; color: #a5a5a5; gap: 7px; font-size: 13px; }
.search.dark input::placeholder { color: #a0a0a0; }
.tree li { line-height: 24px; }
.node { display: flex; align-items: center; height: 24px; padding-left: 14px; }
.ticon { position: relative; margin: 0 5px 0 4px; }
.ok { position: absolute; left: 6px; top: 7px; }
.tree label { display: flex; align-items: center; height: 24px; padding-left: 44px; gap: 26px; }
.tree input { appearance: none; width: 12px; height: 12px; margin: 0; border: 1px solid #aaa; border-radius: 2px; display: grid; place-items: center; }
.tree input:checked { background: var(--teal); border-color: #9bc9c0; }
.tree input:checked::after { content: ""; width: 7px; height: 4px; border: solid #14604f; border-width: 0 0 1px 1px; transform: rotate(-45deg); }

/* status bar */
.status { height: 24px; display: flex; align-items: center; padding: 0 18px 0 4px; flex: none; color: #e0e0e0; }
.zoom { appearance: none; width: 102px; height: 14px; margin: 0 6px 0 3px; background: linear-gradient(#ccc, #ccc) center / 100% 1px no-repeat, linear-gradient(#ccc, #ccc) center / 1px 5px no-repeat; }
.zoom::-webkit-slider-thumb { appearance: none; width: 4px; height: 13px; background: #ddd; }
.pct { margin: 0 19px 0 14px; }

/* taskbar */
.taskbar { height: 40px; display: flex; align-items: stretch; background: #cbd8da; color: #111; flex: none; }
.taskbar button { display: grid; place-items: center; }
.start { width: 48px; }
.tsearch { width: 288px; display: flex; align-items: center; gap: 11px; padding-left: 11px; background: #fff; border: 1px solid #c2c2c2; font-size: 13px; }
.tsearch input { border: 0; padding: 0; outline: 0; background: none; width: 180px; }
.tsearch input::placeholder { color: #333; }
.tview { width: 49px; }
.apps { display: flex; }
.apps button { width: 34px; margin: 0 4px; position: relative; }
.apps button svg { width: 24px; height: 24px; }
.apps .run { border-bottom: 3px solid #76b9ed; padding-top: 3px; }
.apps .active svg { background: #76b3f8; }
.m365 b { position: absolute; left: 9px; top: 23px; font-size: 7px; line-height: 8px; background: #111; color: #fff; }
.tray { display: flex; align-items: center; gap: 10px; }
.clock { width: 74px; font-size: 11px; padding: 2px 0; }
.clock span { line-height: 18px; }
.notif { width: 36px; margin-right: 14px; position: relative; }
.notif b { position: absolute; left: 17px; top: 18px; width: 17px; height: 17px; border: 1px solid #888; border-radius: 50%; background: #dcdcdc; font-size: 10px; line-height: 15px; font-weight: 400; text-align: center; }
```
